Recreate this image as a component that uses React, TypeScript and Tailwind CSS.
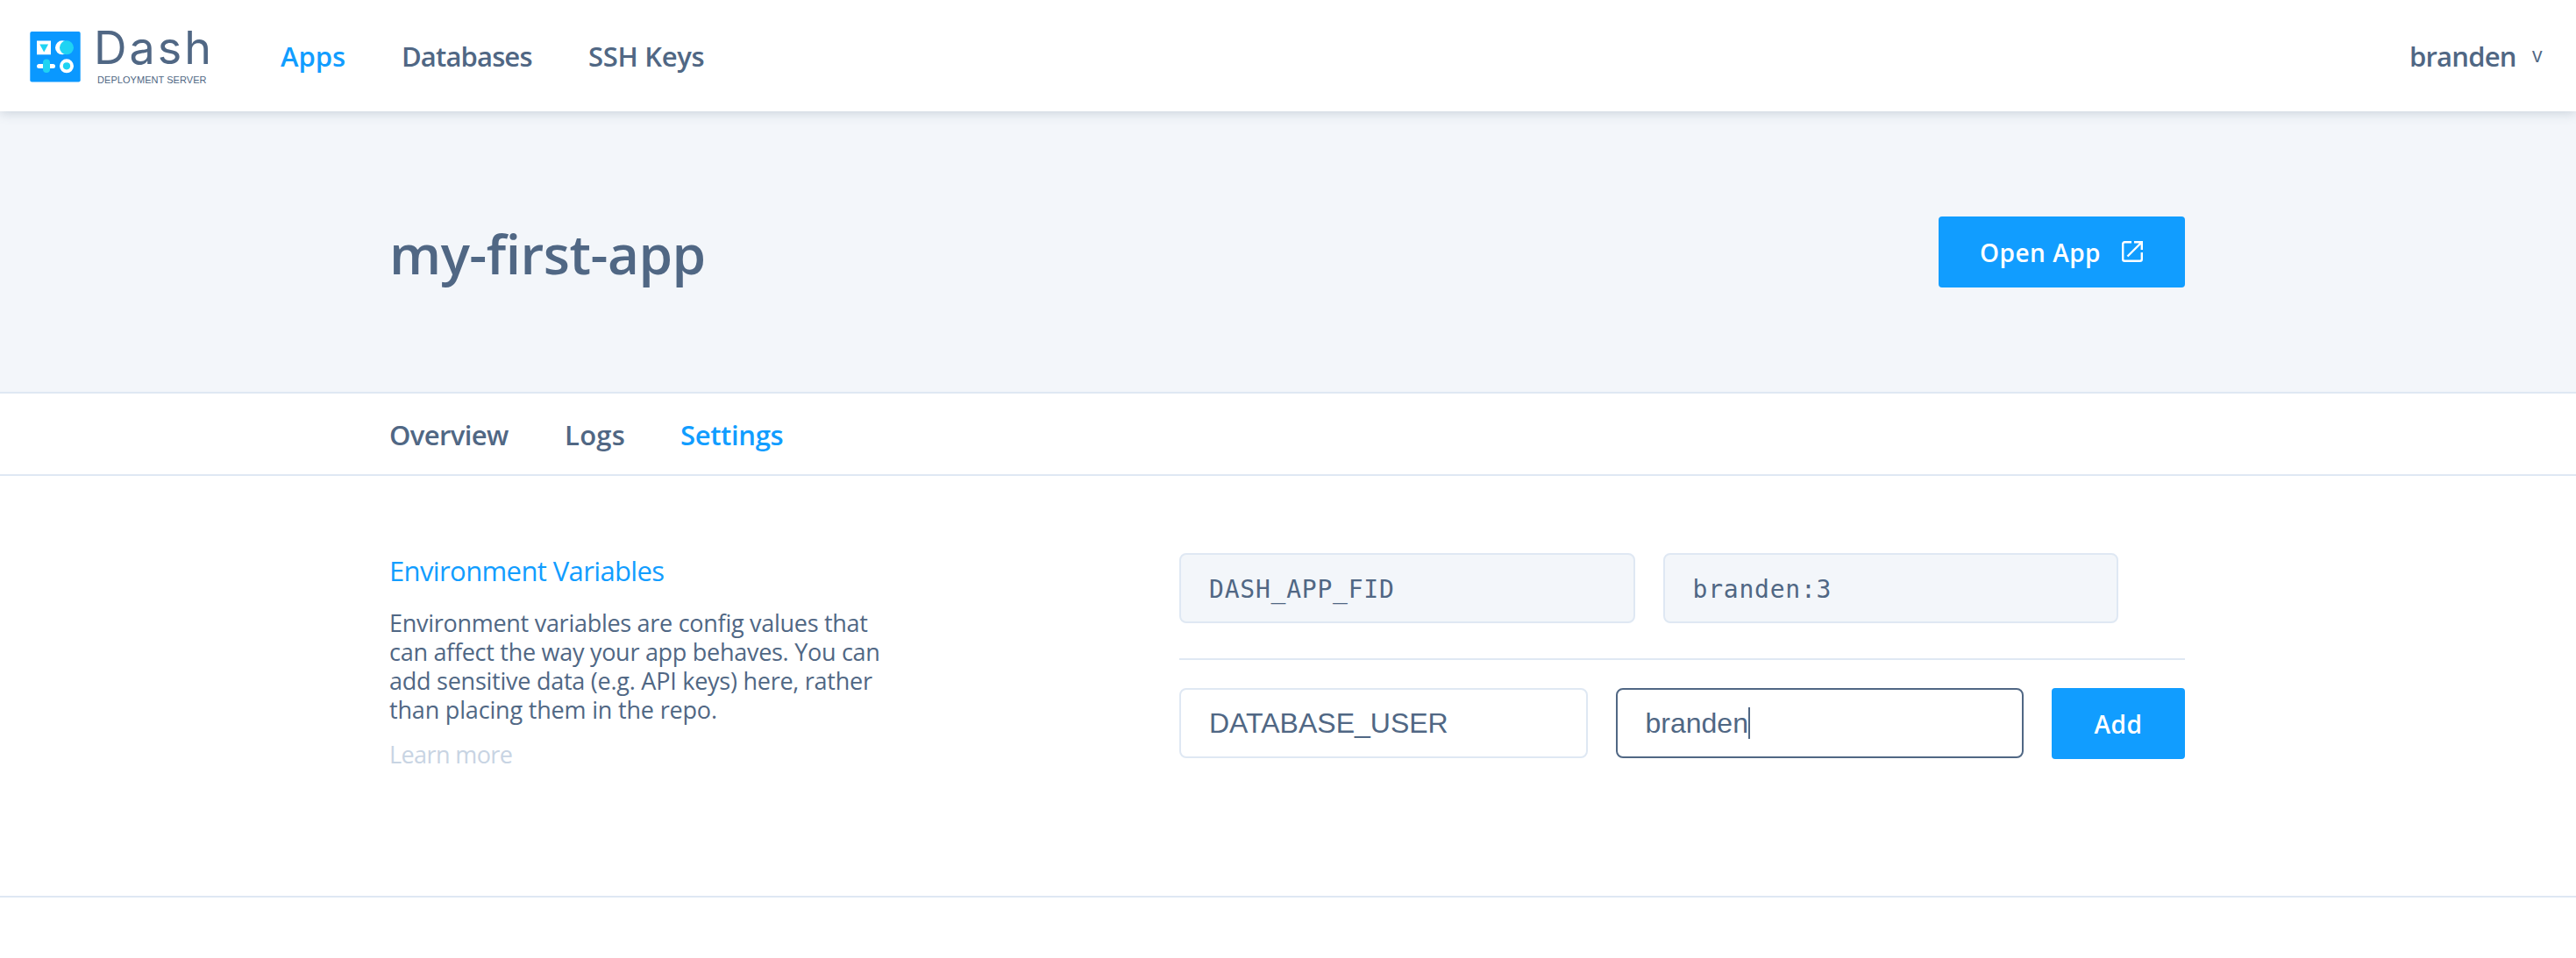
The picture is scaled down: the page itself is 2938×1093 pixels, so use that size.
import type { ReactNode } from "react";

function LogoMark() {
  return (
    <svg className="h-[58px] w-[58px] shrink-0" viewBox="34 36 58 58" aria-hidden="true">
      <rect x="34.3" y="36" width="57.4" height="57.6" rx="2" fill="#0a98ff" />
      <rect x="42" y="46.5" width="16" height="15.8" fill="#fff" />
      <path d="M45.3 50.5h9.8L50.2 59.5z" fill="#1fd3f3" />
      <circle cx="71" cy="54.3" r="8" fill="#fff" />
      <circle cx="76" cy="54.3" r="8" fill="#1fd3f3" />
      <rect x="42" y="73" width="21" height="5" rx="2.5" fill="#fff" />
      <rect x="49" y="67.5" width="8" height="15.6" rx="4" fill="#1fd3f3" />
      <circle cx="76" cy="75.3" r="8" fill="#fff" />
      <circle cx="76" cy="75.3" r="4.1" fill="#1fd3f3" />
    </svg>
  );
}

function OpenIcon() {
  return (
    <svg className="-mt-[3px] ml-[24px] h-6 w-6 shrink-0" viewBox="0 0 24 24" fill="none" stroke="#fff" strokeWidth="2.4" aria-hidden="true">
      <path d="M11 1.2H3.2a2 2 0 0 0-2 2v17.6a2 2 0 0 0 2 2h17.6a2 2 0 0 0 2-2V13" />
      <path d="M14 1.2h8.8V10M22.5 1.5 6.5 17.5" />
    </svg>
  );
}

function ReadonlyField({ children }: { children: ReactNode }) {
  return (
    <div className="flex h-20 flex-1 items-center rounded-[8px] border-2 border-[#dfe8f3] bg-[#f3f6fa] pt-[3px] pl-8 font-['DejaVu_Sans_Mono',monospace] text-[28px] tracking-[0.78px]">
      {children}
    </div>
  );
}

export default function App() {
  return (
    <div className="h-[1093px] w-[2938px] overflow-hidden bg-white font-['Open_Sans',sans-serif] text-[#506784]">
      <header className="relative flex h-[127px] bg-white shadow-[0_2px_12px_rgba(80,103,132,0.25)]">
        <a className="flex pl-[34px]">
          <div className="pt-9">
            <LogoMark />
          </div>
          <div className="ml-[15px] w-[213px] pt-[35px]">
            <div className="font-['Inter',sans-serif] text-[52px] leading-10 tracking-[3px]">Dash</div>
            <div className="mt-[9px] ml-1 font-['Liberation_Sans',sans-serif] text-[11px] leading-[14px] tracking-[0.05px] whitespace-nowrap">
              DEPLOYMENT SERVER
            </div>
          </div>
        </a>
        <nav className="flex items-center gap-16 pt-px text-[31px] font-semibold whitespace-nowrap">
          <a className="w-[74px] text-[#119dff]">Apps</a>
          <a className="w-[149px] tracking-[-0.85px]">Databases</a>
          <a className="tracking-[-0.3px]">SSH Keys</a>
        </nav>
        <div className="ml-auto flex w-[191px] items-center pt-px">
          <span className="w-[141px] pl-px text-[31px] font-semibold tracking-[-0.8px]">branden</span>
          <span className="-mt-1 text-[23px]">v</span>
        </div>
      </header>

      <section className="h-[322px] border-b-2 border-[#dfe8f3] bg-[#f3f6fa]">
        <div className="ml-[444px] flex h-full w-[2048px] items-center justify-between">
          <h1 className="pt-[5px] text-[62px] font-semibold tracking-[-0.5px]">my-first-app</h1>
          <a className="flex h-[81px] w-[281px] items-center rounded-[4px] bg-[#119dff] pt-[2px] pl-[47px] text-[28px] font-semibold tracking-[0.5px] whitespace-nowrap text-white">
            <span className="w-[138px]">Open App</span>
            <OpenIcon />
          </a>
        </div>
      </section>

      <nav className="h-[94px] border-b-2 border-[#dfe8f3]">
        <div className="ml-[444px] flex h-full items-center gap-16 pt-[2px] text-[31px] font-semibold">
          <a className="w-[136px] tracking-[-0.6px]">Overview</a>
          <a className="w-[68px] tracking-[0.3px]">Logs</a>
          <a className="tracking-[-0.35px] text-[#119dff]">Settings</a>
        </div>
      </nav>

      <section className="h-[481px] border-b-2 border-[#dfe8f3] pt-[88px]">
        <div className="ml-[444px] flex w-[2048px] items-start">
          <div className="w-[901px] whitespace-nowrap">
            <h2 className="text-[31px] leading-10 tracking-[-0.62px] text-[#119dff]">Environment Variables</h2>
            <p className="mt-[23px] text-[27px] leading-[33px] tracking-[-0.28px]">
              Environment variables are config values that
              <br />
              can affect the way your app behaves. You can
              <br />
              <span className="tracking-[-0.25px]">add sensitive data (e.g. API keys) here, rather</span>
              <br />
              <span className="tracking-[-0.18px]">than placing them in the repo.</span>
            </p>
            <a className="mt-[18px] block text-[27px] leading-[33px] tracking-[-0.6px] text-[#c8d4e3]">Learn more</a>
          </div>
          <div className="w-[1147px]">
            <div className="flex w-[1071px] gap-8">
              <ReadonlyField>DASH_APP_FID</ReadonlyField>
              <ReadonlyField>branden:3</ReadonlyField>
            </div>
            <div className="mt-10 h-[2px] bg-[#dfe8f3]" />
            <div className="mt-8 flex items-start gap-8 font-['Liberation_Sans',sans-serif] text-[32px]">
              <div className="flex h-20 flex-1 items-center rounded-[8px] border-2 border-[#dfe8f3] pl-8">
                DATABASE_USER
              </div>
              <div className="flex h-20 flex-1 items-center rounded-[8px] border-2 border-[#506784] pl-8">
                branden
                <span className="h-9 w-[2px] bg-[#506784]" />
              </div>
              <button className="h-[81px] w-[152px] rounded-[4px] bg-[#119dff] pt-px font-['Open_Sans',sans-serif] text-[28px] font-semibold tracking-[0.6px] text-white">
                Add
              </button>
            </div>
          </div>
        </div>
      </section>
    </div>
  );
}
